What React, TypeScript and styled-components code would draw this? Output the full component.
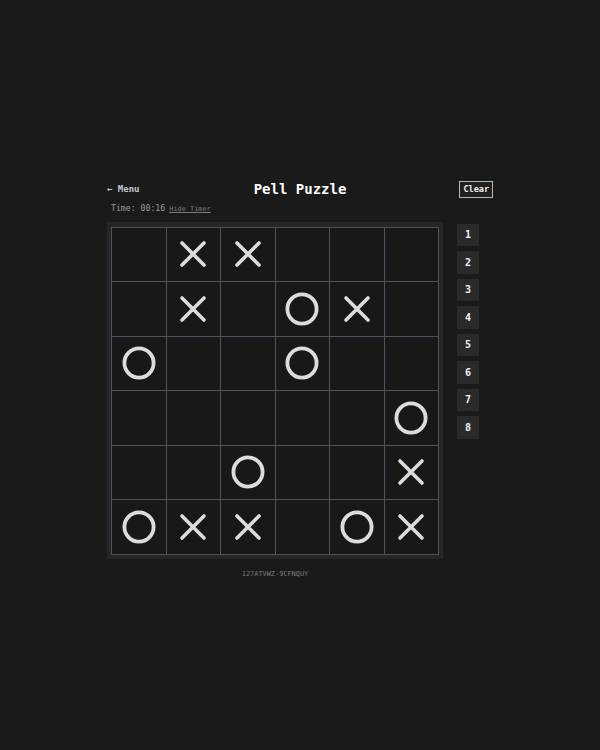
import styled, { createGlobalStyle } from "styled-components";

const GlobalStyle = createGlobalStyle`
  html, body {
    margin: 0;
    padding: 0;
    background-color: #1a1a1a;
  }
  body {
    font-family: "DejaVu Sans Mono", "Liberation Mono", monospace;
    color: #e5e5e5;
  }
`;

const Page = styled.div`
  min-height: 100vh;
  display: flex;
  align-items: center;
  justify-content: center;
`;

const Container = styled.div`
  width: 386px;
  display: flex;
  flex-direction: column;
  margin-top: 8px;
`;

const Header = styled.div`
  display: flex;
  align-items: center;
  justify-content: space-between;
  height: 17px;
`;

const MenuLink = styled.span`
  font-size: 9px;
  font-weight: 700;
  color: #c4c8d0;
  width: 60px;
`;

const Title = styled.h1`
  margin: 0;
  font-size: 14px;
  font-weight: 700;
  color: #ffffff;
`;

const HeaderRight = styled.div`
  width: 60px;
  display: flex;
  justify-content: flex-end;
`;

const ClearButton = styled.button`
  font-family: inherit;
  font-size: 8.5px;
  font-weight: 700;
  color: #f0f0f0;
  background-color: #202020;
  border: 1px solid #b8b8b8;
  height: 17px;
  padding: 0 3px;
`;

const TimerRow = styled.div`
  display: flex;
  align-items: baseline;
  gap: 4px;
  padding-left: 4px;
  margin-top: 5px;
  font-size: 8.2px;
  color: #9a9a9a;
`;

const HideTimer = styled.span`
  font-size: 6.9px;
  color: #7c7c7c;
  text-decoration: underline;
`;

const Main = styled.div`
  display: flex;
  gap: 14px;
  margin-top: 9px;
`;

const BoardPanel = styled.div`
  background-color: #262626;
  padding: 5px 4px 4px 4px;
  width: 328px;
`;

const Grid = styled.div`
  display: grid;
  grid-template-columns: repeat(6, 1fr);
  border-top: 1px solid #4c5360;
  border-left: 1px solid #4c5360;
  width: 327px;
  background-color: #181818;
`;

const Cell = styled.div`
  height: 54.5px;
  border-right: 1px solid #4c5360;
  border-bottom: 1px solid #4c5360;
  box-sizing: border-box;
  display: flex;
  align-items: center;
  justify-content: center;
`;

const NumberColumn = styled.div`
  display: flex;
  flex-direction: column;
  gap: 5px;
  margin-top: 2px;
`;

const NumberButton = styled.div`
  width: 22px;
  height: 22.5px;
  background-color: #2a2a2a;
  color: #f2f2f2;
  font-size: 10px;
  font-weight: 700;
  display: flex;
  align-items: center;
  justify-content: center;
`;

const Code = styled.div`
  margin-top: 11px;
  width: 336px;
  text-align: center;
  font-size: 6.9px;
  color: #7a7a7a;
`;

const MARK = "#dcdcdf";

function XMark() {
  return (
    <svg width="28" height="28" viewBox="0 0 28 28">
      <path
        d="M3 3 L25 25 M25 3 L3 25"
        stroke={MARK}
        strokeWidth="3.6"
        strokeLinecap="round"
        fill="none"
      />
    </svg>
  );
}

function OMark() {
  return (
    <svg width="34" height="34" viewBox="0 0 34 34">
      <circle cx="17" cy="17" r="14.6" stroke={MARK} strokeWidth="3.8" fill="none" />
    </svg>
  );
}

const board = [
  "_XX___",
  "_X_OX_",
  "O__O__",
  "_____O",
  "__O__X",
  "OXX_OX",
];

export default function App() {
  return (
    <Page>
      <GlobalStyle />
      <Container>
        <Header>
          <MenuLink>← Menu</MenuLink>
          <Title>Pell Puzzle</Title>
          <HeaderRight>
            <ClearButton>Clear</ClearButton>
          </HeaderRight>
        </Header>
        <TimerRow>
          <span>Time: 00:16</span>
          <HideTimer>Hide Timer</HideTimer>
        </TimerRow>
        <Main>
          <BoardPanel>
            <Grid>
              {board.flatMap((row, r) =>
                row.split("").map((c, i) => (
                  <Cell key={`${r}-${i}`}>
                    {c === "X" && <XMark />}
                    {c === "O" && <OMark />}
                  </Cell>
                ))
              )}
            </Grid>
          </BoardPanel>
          <NumberColumn>
            {[1, 2, 3, 4, 5, 6, 7, 8].map((n) => (
              <NumberButton key={n}>{n}</NumberButton>
            ))}
          </NumberColumn>
        </Main>
        <Code>127ATVWZ-9CFNQUY</Code>
      </Container>
    </Page>
  );
}
